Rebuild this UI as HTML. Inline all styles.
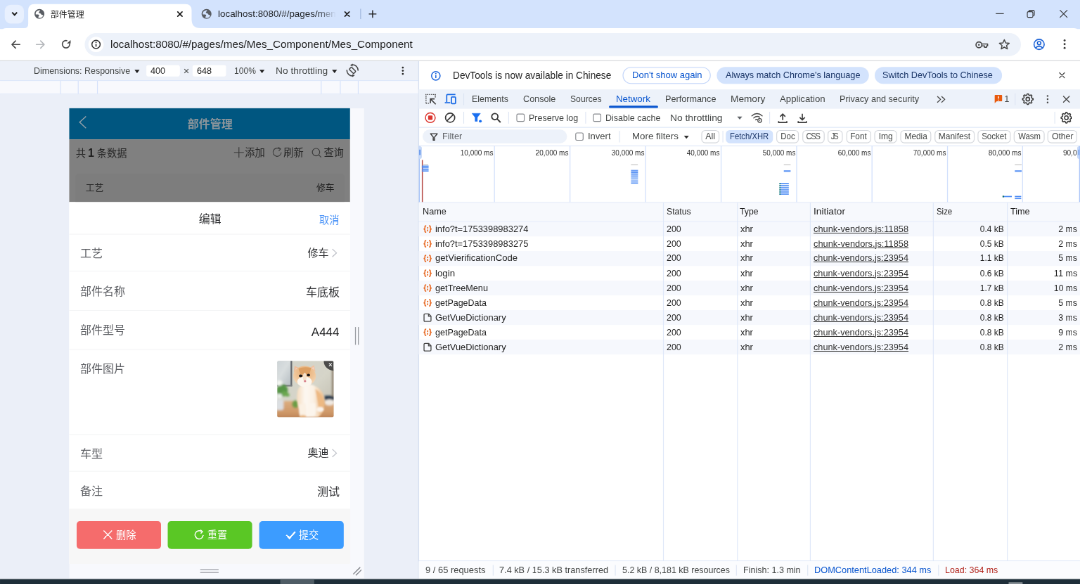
<!DOCTYPE html>
<html lang="zh-CN">
<head>
<meta charset="utf-8">
<title>部件管理</title>
<style>
html,body{margin:0;padding:0;}
html{width:1080px;height:584px;overflow:hidden;background:#fff;}
body{width:1080px;height:584px;overflow:hidden;position:relative;background:#fff;font-family:"Liberation Sans", "Noto Sans CJK SC", sans-serif;}
#root{position:absolute;left:0;top:0;width:1536px;height:831px;overflow:hidden;will-change:transform;transform:scale(0.703125);transform-origin:0 0;}
#z{position:absolute;left:0;top:0;width:1080px;height:584px;zoom:1.4222222;}
.a{position:absolute;left:0;top:0;}
.t{position:absolute;white-space:pre;line-height:14px;font-family:"Liberation Sans", "Noto Sans CJK SC", sans-serif;}
.u{text-decoration:underline;text-decoration-thickness:0.75px;text-underline-offset:0.7px;}
</style>
</head>
<body>
<div id="root"><div id="z">
<svg class="a" width="1080" height="584" viewBox="0 0 1080 584"><rect x="0" y="0" width="1080" height="29" fill="#d3e3fd"/>
<rect x="4.7" y="4.7" width="19.2" height="18.9" rx="6" fill="#e8f0fe"/>
<g transform="translate(10.5 11.4)"><path d="M1.6 1.0 L4.05 3.5 L6.5 1.0" fill="none" stroke="#1f1f1f" stroke-width="1.45" stroke-linejoin="miter"/></g>
<path d="M6.00 28.20H1074.00A6.0 6.0 0 0 1 1080.00 34.20V60.40H0.00V34.20A6.0 6.0 0 0 1 6.00 28.20Z" fill="#fff"/>
<g transform="translate(0 0)"><path d="M23.7 29 V28.2 Q28.2 28.2 28.2 23.7 V10.4 Q28.2 4.1 34.5 4.1 H185.3 Q191.6 4.1 191.6 10.4 V19.4 Q191.6 28.2 200.6 28.2 V29 Z" fill="#fff"/></g>
<g transform="translate(34.4 8.9)"><circle cx="5" cy="5" r="4.95" fill="#595d63"/><path d="M1.9 2.7 Q3.4 1.2 5.5 1.1 L5.3 2.1 Q4.1 3.1 4.4 3.9 L5.7 4.4 Q6.7 4.9 7.1 5.8 L8.8 6.2 Q8.4 8 6.7 8.8 Q5.1 9.3 3.9 8.9 Q3.8 7.6 4.7 6.8 Q4.6 5.8 3.6 5.6 L1.3 5.6 Q0.9 4 1.9 2.7 Z" fill="#fff"/></g></svg>
<span class="t" style="left:50.5px;top:8.19px;font-size:8.45px;color:#1f1f1f;">部件管理</span>
<svg class="a" width="1080" height="584" viewBox="0 0 1080 584"><g transform="translate(177.4 11.5)"><path d="M0.3 0.3 L4.7 4.7 M4.7 0.3 L0.3 4.7" stroke="#1f1f1f" stroke-width="1.2" fill="none" stroke-linecap="round"/></g>
<g transform="translate(201.5 8.9)"><circle cx="5" cy="5" r="4.95" fill="#595d63"/><path d="M1.9 2.7 Q3.4 1.2 5.5 1.1 L5.3 2.1 Q4.1 3.1 4.4 3.9 L5.7 4.4 Q6.7 4.9 7.1 5.8 L8.8 6.2 Q8.4 8 6.7 8.8 Q5.1 9.3 3.9 8.9 Q3.8 7.6 4.7 6.8 Q4.6 5.8 3.6 5.6 L1.3 5.6 Q0.9 4 1.9 2.7 Z" fill="#d3e3fd"/></g></svg>
<span class="t" style="left:217.8px;top:6.78px;font-size:9px;color:#24272b;transform:scaleX(1.0480);transform-origin:0 50%;-webkit-mask-image:linear-gradient(90deg,#000 84%,transparent 100%);mask-image:linear-gradient(90deg,#000 84%,transparent 100%);">localhost:8080/#/pages/men</span>
<svg class="a" width="1080" height="584" viewBox="0 0 1080 584"><g transform="translate(344.6 11.5)"><path d="M0.3 0.3 L4.7 4.7 M4.7 0.3 L0.3 4.7" stroke="#1f1f1f" stroke-width="1.2" fill="none" stroke-linecap="round"/></g>
<rect x="360.2" y="8.8" width="0.8" height="10.2" fill="#9db5dc"/>
<g transform="translate(367.6 9)"><path d="M5 1.2 V8.8 M1.2 5 H8.8" stroke="#1f1f1f" stroke-width="1.0" fill="none"/></g>
<g transform="translate(995.8 9.6)"><path d="M0 4 H8" stroke="#2b2b2b" stroke-width="0.75" fill="none"/></g>
<g transform="translate(1026.8 9.8)"><rect x="0.5" y="1.9" width="5.6" height="5.6" rx="1.2" fill="none" stroke="#2b2b2b" stroke-width="0.75"/><path d="M2 1.9 V1.6 Q2 0.5 3.1 0.5 H6.4 Q7.5 0.5 7.5 1.6 V5 Q7.5 6 6.4 6" fill="none" stroke="#2b2b2b" stroke-width="0.75"/></g>
<g transform="translate(1059.8 10)"><path d="M0.3 0.3 L7.3 7.3 M7.3 0.3 L0.3 7.3" stroke="#2b2b2b" stroke-width="0.75" fill="none" stroke-linecap="round"/></g>
<g transform="translate(11.1 40.2)"><path d="M8.7 4.3 H0.9 M4.4 0.7 L0.8 4.3 L4.4 7.9" stroke="#474747" stroke-width="1.15" fill="none" stroke-linejoin="round" stroke-linecap="round"/></g>
<g transform="translate(36 40.2)"><path d="M0.3 4.3 H8.1 M4.6 0.7 L8.2 4.3 L4.6 7.9" stroke="#b4b7bb" stroke-width="1.15" fill="none" stroke-linejoin="round" stroke-linecap="round"/></g>
<g transform="translate(60.8 39)"><path d="M8.55 3.64 A3.7 3.7 0 1 0 8.23 7.32" fill="none" stroke="#474747" stroke-width="1.15" transform="rotate(-35 5.2 5.2) scale(1,-1) translate(0,-10.4)"/><path d="M9.80 1.10 V4.50 H6.10 Z" fill="#474747"/></g>
<rect x="84.7" y="33" width="936.2" height="23" rx="11.5" fill="#edf2fa"/>
<rect x="88.3" y="36.7" width="15.4" height="15.4" rx="7.7" fill="#fff"/>
<g transform="translate(91 39.4)"><circle cx="5" cy="5" r="4.1" fill="none" stroke="#303030" stroke-width="1"/><path d="M5 4.5 V7.3" stroke="#303030" stroke-width="1.1"/><circle cx="5" cy="2.9" r="0.65" fill="#303030"/></g></svg>
<span class="t" style="left:110.3px;top:36.96px;font-size:10.6px;color:#1f1f1f;transform:scaleX(1.0105);transform-origin:0 50%;">localhost:8080/#/pages/mes/Mes_Component/Mes_Component</span>
<svg class="a" width="1080" height="584" viewBox="0 0 1080 584"><g transform="translate(975.3 40.3)"><circle cx="3.6" cy="4.5" r="2.9" fill="none" stroke="#474747" stroke-width="1.15"/><circle cx="3.6" cy="4.5" r="0.9" fill="#474747"/><path d="M6.5 3.6 H12.3 V5.6 H11.2 V7 H9.2 V5.6 H6.5" fill="none" stroke="#474747" stroke-width="1.1" stroke-linejoin="round"/></g>
<g transform="translate(998.6 38.8)"><path d="M5.7 0.9 L7.1 4.1 L10.6 4.4 L7.95 6.7 L8.75 10.1 L5.7 8.3 L2.65 10.1 L3.45 6.7 L0.8 4.4 L4.3 4.1 Z" fill="none" stroke="#474747" stroke-width="1.05" stroke-linejoin="round"/></g>
<g transform="translate(1033.3 38.6)"><circle cx="5.8" cy="5.8" r="5.1" fill="#f2f6fe" stroke="#1a62d8" stroke-width="1.1"/><circle cx="5.8" cy="4.5" r="1.7" fill="none" stroke="#0b57d0" stroke-width="1"/><path d="M2.4 9.1 Q5.8 6.3 9.2 9.1" fill="none" stroke="#0b57d0" stroke-width="1"/></g>
<g transform="translate(1062.6 38.45)"><circle cx="2" cy="2.0" r="1.05" fill="#3a3a3a"/><circle cx="2" cy="5.75" r="1.05" fill="#3a3a3a"/><circle cx="2" cy="9.5" r="1.05" fill="#3a3a3a"/></g>
<rect x="0" y="60.2" width="1080" height="0.9" fill="#d5d7db"/>
<rect x="0" y="61.1" width="418.7" height="19.5" fill="#edf1f9"/></svg>
<span class="t" style="left:33.7px;top:63.69px;font-size:9.1px;color:#444746;transform:scaleX(0.9632);transform-origin:0 50%;">Dimensions: Responsive</span>
<svg class="a" width="1080" height="584" viewBox="0 0 1080 584"><g transform="translate(134.5 69.75)"><path d="M0 0 H5.0 L2.5 3.3 Z" fill="#1f1f1f"/></g>
<rect x="146.3" y="65" width="33.6" height="11.4" rx="2" fill="#fff"/></svg>
<span class="t" style="left:150.3px;top:63.69px;font-size:9.1px;color:#1f1f1f;transform:scaleX(0.9811);transform-origin:0 50%;">400</span>
<span class="t" style="left:183.26px;top:64.38px;font-size:10.4px;color:#444746;">×</span>
<svg class="a" width="1080" height="584" viewBox="0 0 1080 584"><rect x="192.5" y="65" width="33.6" height="11.4" rx="2" fill="#fff"/></svg>
<span class="t" style="left:196.8px;top:63.69px;font-size:9.1px;color:#1f1f1f;transform:scaleX(0.9811);transform-origin:0 50%;">648</span>
<span class="t" style="left:233.8px;top:63.69px;font-size:9.1px;color:#444746;transform:scaleX(0.9327);transform-origin:0 50%;">100%</span>
<svg class="a" width="1080" height="584" viewBox="0 0 1080 584"><g transform="translate(259.5 69.75)"><path d="M0 0 H5.0 L2.5 3.3 Z" fill="#1f1f1f"/></g></svg>
<span class="t" style="left:275.6px;top:63.69px;font-size:9.1px;color:#444746;transform:scaleX(1.0646);transform-origin:0 50%;">No throttling</span>
<svg class="a" width="1080" height="584" viewBox="0 0 1080 584"><g transform="translate(332 69.75)"><path d="M0 0 H5.0 L2.5 3.3 Z" fill="#1f1f1f"/></g>
<g transform="translate(345.95 63.8)"><g fill="none" stroke="#444" stroke-width="1.05"><rect x="3.35" y="4.9" width="6.3" height="3.2" rx="0.75" transform="rotate(45 6.5 6.5)"/><path d="M5.6 1 A5.6 5.6 0 0 1 12.1 6.9"/><path d="M0.9 6.1 A5.6 5.6 0 0 0 7.4 12"/></g><path d="M4.1 1.5 L6.7 -0.2 L6.6 2.7 Z" fill="#444"/><path d="M8.9 11.5 L6.3 13.2 L6.4 10.3 Z" fill="#444"/></g>
<g transform="translate(400.8 65.55)"><circle cx="2" cy="2.0" r="0.95" fill="#2b2b2b"/><circle cx="2" cy="5.15" r="0.95" fill="#2b2b2b"/><circle cx="2" cy="8.3" r="0.95" fill="#2b2b2b"/></g>
<rect x="0" y="80.6" width="418.7" height="13.4" fill="#f8f9fd"/>
<rect x="60.1" y="80.6" width="0.8" height="13.4" fill="#d6e2fb"/>
<rect x="77.8" y="80.6" width="0.8" height="13.4" fill="#d6e2fb"/>
<rect x="97" y="80.6" width="0.8" height="13.4" fill="#d6e2fb"/>
<rect x="320.8" y="80.6" width="0.8" height="13.4" fill="#d6e2fb"/>
<rect x="339.9" y="80.6" width="0.8" height="13.4" fill="#d6e2fb"/>
<rect x="357.8" y="80.6" width="0.8" height="13.4" fill="#d6e2fb"/>
<rect x="0" y="80.2" width="418.7" height="0.7" fill="#dde7fa"/>
<rect x="0" y="93.6" width="418.7" height="0.7" fill="#dde7fa"/>
<rect x="0" y="94.2" width="418.7" height="484.4" fill="#ebeff8"/>
<rect x="69.2" y="108.2" width="294.9" height="470.2" fill="#f8f9fd"/>
<rect x="355" y="327" width="0.9" height="17.8" fill="#9a9da3"/>
<rect x="357.9" y="327" width="0.9" height="17.8" fill="#9a9da3"/>
<rect x="200.2" y="569.3" width="18.4" height="0.9" fill="#9a9da3"/>
<rect x="200.2" y="572" width="18.4" height="0.9" fill="#9a9da3"/>
<g transform="translate(352 566)"><path d="M1.2 8.2 L8.2 1.2 M3.8 9.4 L9.4 3.8" stroke="#7e8187" stroke-width="0.95" fill="none"/></g>
<rect x="69.2" y="108.2" width="280.8" height="455.6" fill="#fff"/>
<rect x="69.2" y="108.2" width="280.8" height="31.2" fill="#005680"/>
<g transform="translate(78.9 115.9)"><path d="M7.1 0.4 L0.7 6.3 L7.1 12.2" fill="none" stroke="#97a2aa" stroke-width="1" /></g></svg>
<span class="t" style="left:187.49px;top:117.11px;font-size:11.25px;color:#8d969c;font-weight:700;">部件管理</span>
<svg class="a" width="1080" height="584" viewBox="0 0 1080 584"><rect x="69.2" y="139.3" width="280.8" height="62.8" fill="#808080"/></svg>
<span class="t" style="left:75.7px;top:146.76px;font-size:10px;color:#262626;">共</span>
<span class="t" style="left:87.9px;top:146.01px;font-size:11.2px;color:#1c1c1c;font-weight:700;">1</span>
<span class="t" style="left:96.9px;top:146.76px;font-size:10px;color:#262626;">条数据</span>
<svg class="a" width="1080" height="584" viewBox="0 0 1080 584"><g transform="translate(234 147.2)"><path d="M4.9 0 V10.4 M0 5.2 H9.8" stroke="#3a3a3a" stroke-width="0.8" fill="none"/></g></svg>
<span class="t" style="left:244.9px;top:146.04px;font-size:10px;color:#262626;">添加</span>
<svg class="a" width="1080" height="584" viewBox="0 0 1080 584"><g transform="translate(272.2 147.2)"><path d="M9 5.2 A4.1 4.1 0 1 1 7.3 1.7" fill="none" stroke="#3a3a3a" stroke-width="0.8"/><path d="M6.2 0.1 L8.3 1.8 L6.5 3.7" fill="none" stroke="#3a3a3a" stroke-width="0.8"/></g></svg>
<span class="t" style="left:283.6px;top:146.04px;font-size:10px;color:#262626;">刷新</span>
<svg class="a" width="1080" height="584" viewBox="0 0 1080 584"><g transform="translate(311.8 147.8)"><circle cx="4.2" cy="4.3" r="3.7" fill="none" stroke="#3a3a3a" stroke-width="0.8"/><path d="M6.9 7 L9.2 9.4" stroke="#3a3a3a" stroke-width="0.85"/></g></svg>
<span class="t" style="left:323.8px;top:146.04px;font-size:10px;color:#262626;">查询</span>
<svg class="a" width="1080" height="584" viewBox="0 0 1080 584"><path d="M78.40 174.00H341.30A3.0 3.0 0 0 1 344.30 177.00V202.10H75.40V177.00A3.0 3.0 0 0 1 78.40 174.00Z" fill="#7d7d7d"/></svg>
<span class="t" style="left:85.6px;top:180.46px;font-size:9px;color:#2c2c2c;">工艺</span>
<span class="t" style="left:316.4px;top:180.46px;font-size:9px;color:#222;">修车</span>
<svg class="a" width="1080" height="584" viewBox="0 0 1080 584"><rect x="69.2" y="202" width="280.8" height="306.8" fill="#fff"/></svg>
<span class="t" style="left:198.8px;top:212.19px;font-size:11.2px;color:#303133;">编辑</span>
<span class="t" style="left:319.3px;top:213.46px;font-size:10px;color:#4a93f8;">取消</span>
<svg class="a" width="1080" height="584" viewBox="0 0 1080 584"><rect x="69.2" y="233.85" width="280.8" height="0.75" fill="#f4f5f6"/>
<rect x="69.2" y="270.75" width="280.8" height="0.75" fill="#f4f5f6"/>
<rect x="69.2" y="310.05" width="280.8" height="0.75" fill="#f4f5f6"/>
<rect x="69.2" y="348.95" width="280.8" height="0.75" fill="#f4f5f6"/>
<rect x="69.2" y="433.95" width="280.8" height="0.75" fill="#f4f5f6"/>
<rect x="69.2" y="470.85" width="280.8" height="0.75" fill="#f4f5f6"/></svg>
<span class="t" style="left:80.2px;top:246.56px;font-size:11.25px;color:#5c5e63;">工艺</span>
<span class="t" style="left:307.6px;top:245.93px;font-size:10.6px;color:#2f3033;">修车</span>
<svg class="a" width="1080" height="584" viewBox="0 0 1080 584"><g transform="translate(331.5 248.4)"><path d="M0.8 0.6 L5 4.5 L0.8 8.4" fill="none" stroke="#b9bcc4" stroke-width="0.8"/></g></svg>
<span class="t" style="left:80.2px;top:284.61px;font-size:11.25px;color:#5c5e63;">部件名称</span>
<span class="t" style="left:305.83px;top:285.16px;font-size:11.25px;color:#2f3033;">车底板</span>
<span class="t" style="left:80.2px;top:323.09px;font-size:11.25px;color:#5c5e63;">部件型号</span>
<span class="t" style="left:313.22px;top:325.23px;font-size:11.25px;color:#1d1e20;transform:scaleX(1.0578);transform-origin:100% 50%;">A444</span>
<span class="t" style="left:80.2px;top:361.94px;font-size:11.25px;color:#5c5e63;">部件图片</span>
<svg class="a" width="1080" height="584" viewBox="0 0 1080 584"><g transform="translate(277.2 360.8) scale(0.7050 0.7050)">
<defs>
<clipPath id="cc"><rect x="0" y="0" width="80" height="80" rx="2.2"/></clipPath>
<filter id="b1" x="-20%" y="-20%" width="140%" height="140%"><feGaussianBlur stdDeviation="1.5"/></filter>
<filter id="b2" x="-20%" y="-20%" width="140%" height="140%"><feGaussianBlur stdDeviation="0.9"/></filter>
<filter id="b3" x="-20%" y="-20%" width="140%" height="140%"><feGaussianBlur stdDeviation="0.45"/></filter>
<linearGradient id="wall" x1="0" y1="0" x2="1" y2="1"><stop offset="0" stop-color="#d2d3ca"/><stop offset="0.55" stop-color="#d6d5c9"/><stop offset="1" stop-color="#bdb9ab"/></linearGradient>
<linearGradient id="tb" x1="0" y1="0" x2="0" y2="1"><stop offset="0" stop-color="#dcae80"/><stop offset="0.6" stop-color="#cf9868"/><stop offset="1" stop-color="#b67c50"/></linearGradient>
<linearGradient id="fr" x1="0" y1="0" x2="1" y2="1"><stop offset="0" stop-color="#c9d0d4"/><stop offset="0.5" stop-color="#d9dedf"/><stop offset="1" stop-color="#b4bcc1"/></linearGradient>
<radialGradient id="hd" cx="0.5" cy="0.3" r="0.75"><stop offset="0" stop-color="#e6ab72"/><stop offset="0.55" stop-color="#efc496"/><stop offset="1" stop-color="#f6dcc0"/></radialGradient>
<linearGradient id="bd" x1="0" y1="0" x2="1" y2="0"><stop offset="0" stop-color="#f6dcbd"/><stop offset="0.3" stop-color="#fdf8f2"/><stop offset="0.6" stop-color="#fbf1e4"/><stop offset="1" stop-color="#ecbb87"/></linearGradient>
</defs>
<g clip-path="url(#cc)">
<rect width="80" height="80" fill="url(#wall)"/>
<g filter="url(#b3)">
<rect x="-4" y="-4" width="24" height="39" fill="url(#fr)"/>
<rect x="18.9" y="-4" width="2.3" height="40" fill="#666b6f"/>
<rect x="-4" y="34.3" width="25.2" height="2.1" fill="#7b8083"/>
</g>
<g filter="url(#b1)">
<rect x="-4" y="57" width="88" height="27" fill="url(#tb)"/>
<ellipse cx="7" cy="42" rx="8" ry="9" fill="#579647"/>
<ellipse cx="12" cy="47" rx="6" ry="3" fill="#6aa84f" transform="rotate(25 12 47)"/>
<ellipse cx="3" cy="31.5" rx="4.5" ry="4" fill="#f3f6f1"/>
<ellipse cx="3.5" cy="50" rx="3.6" ry="3.6" fill="#e9efe8"/>
<rect x="-3" y="55" width="12" height="15" rx="3" fill="#dcdfe2"/>
<ellipse cx="26" cy="61.5" rx="5" ry="5.5" fill="#6c9d45"/>
<rect x="67" y="49.5" width="16" height="6.5" fill="#27384c"/>
<ellipse cx="74" cy="59" rx="7" ry="4.2" fill="#f0eae3"/>
<rect x="77.6" y="12" width="4" height="39" fill="#8f8270"/>
</g>
<g filter="url(#b2)">
<path d="M29 42 Q26 56 31 70 Q33 79 40 80 L58 80 Q66 74 67 62 Q68 48 60 40 Q50 32 40 33 Q31 35 29 42 Z" fill="url(#bd)"/>
<path d="M54 40 Q64 46 66 58 Q67 70 60 76 Q58 62 54 40 Z" fill="#edb983"/>
<ellipse cx="61" cy="69" rx="5.2" ry="3.6" fill="#fbf4ec"/>
<path d="M31 62 Q30 76 33 80 L41 80 Q42 70 40 60 Z" fill="#fbf1e4"/>
<path d="M45 60 Q43 72 45 77 Q49 80 54 77 Q56 70 54 60 Z" fill="#fcf5ec"/>
<path d="M32 78 Q36 76 41 78 L41 81 L32 81 Z" fill="#e9b988"/>
</g>
<g filter="url(#b3)">
<path d="M23.5 16 L24.6 7 L33 11 Z" fill="#eebd99"/>
<path d="M45.5 10 L52.2 6 L54.3 15.5 Z" fill="#efc3a2"/>
<path d="M26 13.6 L26.4 9.6 L30 11.6 Z" fill="#f3cdbf"/>
<path d="M48.6 10.6 L51.6 8.6 L52.6 13 Z" fill="#f4d0c2"/>
<ellipse cx="38.8" cy="21.6" rx="16" ry="14.2" fill="url(#hd)"/>
<path d="M30 11 Q38 7.6 48 10 L46 18 Q39 20.5 33 18.6 Z" fill="#dd9f62"/>
<ellipse cx="38.8" cy="29.6" rx="10.4" ry="7.4" fill="#fcf6ee"/>
<ellipse cx="39" cy="23" rx="2.6" ry="6" fill="#f6e2cb"/>
<ellipse cx="33.3" cy="21.3" rx="2.5" ry="2.0" fill="#1a1512"/>
<ellipse cx="44.3" cy="20.2" rx="2.3" ry="1.9" fill="#1a1512"/>
<ellipse cx="39.4" cy="28.8" rx="1.7" ry="1.5" fill="#d77f8c"/>
</g>
<path d="M66 0 H80 V14 A14 14 0 0 1 66 0 Z" fill="#3c3c3c" opacity="0.9"/>
<path d="M73.4 3.4 L77.4 7.4 M77.4 3.4 L73.4 7.4" stroke="#fff" stroke-width="1" fill="none"/>
</g></g></svg>
<span class="t" style="left:80.2px;top:446.9px;font-size:11.25px;color:#5c5e63;">车型</span>
<span class="t" style="left:307.6px;top:445.6px;font-size:10.6px;color:#2f3033;">奥迪</span>
<svg class="a" width="1080" height="584" viewBox="0 0 1080 584"><g transform="translate(331.5 448.6)"><path d="M0.8 0.6 L5 4.5 L0.8 8.4" fill="none" stroke="#b9bcc4" stroke-width="0.8"/></g></svg>
<span class="t" style="left:80.2px;top:484.22px;font-size:11.25px;color:#5c5e63;">备注</span>
<span class="t" style="left:317.08px;top:484.86px;font-size:11.25px;color:#2f3033;">测试</span>
<svg class="a" width="1080" height="584" viewBox="0 0 1080 584"><rect x="69.2" y="508.8" width="280.8" height="55" fill="#f7f7f7"/>
<rect x="76.6" y="521.1" width="84.4" height="27.9" rx="3.5" fill="#f56c6c"/>
<rect x="167.7" y="521.1" width="84.4" height="27.9" rx="3.5" fill="#5ac725"/>
<rect x="259.2" y="521.1" width="84.5" height="27.9" rx="3.5" fill="#3c9cff"/>
<g transform="translate(103.1 530.1)"><path d="M0.5 0.5 L8.9 8.9 M8.9 0.5 L0.5 8.9" stroke="#fff" stroke-width="1.0" fill="none"/></g></svg>
<span class="t" style="left:116px;top:528.45px;font-size:10px;color:#fff;">删除</span>
<svg class="a" width="1080" height="584" viewBox="0 0 1080 584"><g transform="translate(194.2 529.8)"><path d="M9 5.2 A4.1 4.1 0 1 1 7.3 1.7" fill="none" stroke="#fff" stroke-width="1.0"/><path d="M6.2 0.1 L8.3 1.8 L6.5 3.7" fill="none" stroke="#fff" stroke-width="1.0"/></g></svg>
<span class="t" style="left:207.3px;top:528.45px;font-size:10px;color:#fff;">重置</span>
<svg class="a" width="1080" height="584" viewBox="0 0 1080 584"><g transform="translate(285.6 530.6)"><path d="M0.7 4.4 L3.9 7.7 L9.6 1.1" fill="none" stroke="#fff" stroke-width="1.5"/></g></svg>
<span class="t" style="left:298.6px;top:528.45px;font-size:10px;color:#fff;">提交</span>
<svg class="a" width="1080" height="584" viewBox="0 0 1080 584"><rect x="418.7" y="61.1" width="661.3" height="517.3" fill="#fff"/>
<rect x="418.2" y="61.1" width="0.9" height="517.3" fill="#d7e0f1"/>
<g transform="translate(430.6 70.6)"><circle cx="5.2" cy="5.2" r="4.3" fill="none" stroke="#2a6fdf" stroke-width="1.1"/><path d="M5.2 4.7 V7.5" stroke="#2a6fdf" stroke-width="1.1"/><circle cx="5.2" cy="3.1" r="0.7" fill="#2a6fdf"/></g></svg>
<span class="t" style="left:452.8px;top:68.56px;font-size:9.7px;color:#1f1f1f;transform:scaleX(0.9938);transform-origin:0 50%;">DevTools is now available in Chinese</span>
<svg class="a" width="1080" height="584" viewBox="0 0 1080 584"><rect x="623" y="67.3" width="87.3" height="16.2" rx="8.1" fill="#fff" stroke="#c0d4fa" stroke-width="0.8"/></svg>
<span class="t" style="left:632.2px;top:67.91px;font-size:9.1px;color:#0b57d0;transform:scaleX(1.0074);transform-origin:0 50%;">Don&#x27;t show again</span>
<svg class="a" width="1080" height="584" viewBox="0 0 1080 584"><rect x="716.8" y="66.9" width="152.1" height="17" rx="8.5" fill="#d3e3fd"/></svg>
<span class="t" style="left:725.4px;top:67.91px;font-size:9.1px;color:#1b3668;transform:scaleX(0.9810);transform-origin:0 50%;">Always match Chrome&#x27;s language</span>
<svg class="a" width="1080" height="584" viewBox="0 0 1080 584"><rect x="874.7" y="66.9" width="127.3" height="17" rx="8.5" fill="#d3e3fd"/></svg>
<span class="t" style="left:882.6px;top:67.91px;font-size:9.1px;color:#1b3668;transform:scaleX(0.9785);transform-origin:0 50%;">Switch DevTools to Chinese</span>
<svg class="a" width="1080" height="584" viewBox="0 0 1080 584"><g transform="translate(1059.2 72.5)"><path d="M0.3 0.3 L5.3 5.3 M5.3 0.3 L0.3 5.3" stroke="#474747" stroke-width="0.95" fill="none" stroke-linecap="round"/></g>
<rect x="418.7" y="89.4" width="661.3" height="19.3" fill="#edf2fa"/>
<g transform="translate(425.4 93.9)"><path d="M0.6 9.4 V0.6 H9.9 V3.6 M0.6 9.4 H3.6" fill="none" stroke="#3c3c3c" stroke-width="1" stroke-dasharray="1.05 0.95"/><path d="M5 5 L10.3 10.3 M5 9.2 V5 H9.2" fill="none" stroke="#3c3c3c" stroke-width="1.1"/></g>
<g transform="translate(444.8 93.8)"><g fill="none" stroke="#1a6be6" stroke-width="1.2"><path d="M1.9 8.1 V1.6 Q1.9 0.7 2.8 0.7 H10.6"/><path d="M0 8.9 H5.4"/><rect x="6.6" y="3.1" width="4.1" height="6.7" rx="0.7"/></g></g>
<rect x="463.4" y="93.4" width="0.7" height="11.6" fill="#dce4f3"/></svg>
<span class="t" style="left:471.8px;top:91.83px;font-size:9.1px;color:#444746;transform:scaleX(0.9625);transform-origin:0 50%;">Elements</span>
<span class="t" style="left:522.8px;top:91.83px;font-size:9.1px;color:#444746;transform:scaleX(0.9768);transform-origin:0 50%;">Console</span>
<span class="t" style="left:570.1px;top:91.83px;font-size:9.1px;color:#444746;transform:scaleX(0.9408);transform-origin:0 50%;">Sources</span>
<span class="t" style="left:616.2px;top:91.83px;font-size:9.1px;color:#0b57d0;transform:scaleX(1.0282);transform-origin:0 50%;">Network</span>
<span class="t" style="left:665.3px;top:91.83px;font-size:9.1px;color:#444746;transform:scaleX(0.9777);transform-origin:0 50%;">Performance</span>
<span class="t" style="left:730.5px;top:91.83px;font-size:9.1px;color:#444746;transform:scaleX(1.0565);transform-origin:0 50%;">Memory</span>
<span class="t" style="left:779.8px;top:91.83px;font-size:9.1px;color:#444746;transform:scaleX(1.0202);transform-origin:0 50%;">Application</span>
<span class="t" style="left:839.5px;top:91.83px;font-size:9.1px;color:#444746;transform:scaleX(0.9770);transform-origin:0 50%;">Privacy and security</span>
<svg class="a" width="1080" height="584" viewBox="0 0 1080 584"><rect x="608.9" y="105.7" width="49.2" height="2.3" rx="1.15" fill="#0b57d0"/>
<g transform="translate(936.6 95.6)"><path d="M0.7 0.7 L3.9 3.8 L0.7 6.9 M4.9 0.7 L8.1 3.8 L4.9 6.9" fill="none" stroke="#474747" stroke-width="0.95"/></g>
<g transform="translate(994.4 94.8)"><path d="M0.3 0.8 Q0.3 0.2 0.9 0.2 H7.1 Q7.7 0.2 7.7 0.8 V5.9 Q7.7 6.5 7.1 6.5 H2.3 L0.3 8.4 Z" fill="#e8590c"/><path d="M4 1.4 V3.9" stroke="#fff" stroke-width="1"/><circle cx="4" cy="5.2" r="0.55" fill="#fff"/></g></svg>
<span class="t" style="left:1004.2px;top:91.85px;font-size:9.1px;color:#444746;">1</span>
<svg class="a" width="1080" height="584" viewBox="0 0 1080 584"><rect x="1014.8" y="93.4" width="0.7" height="11.6" fill="#dce4f3"/>
<g transform="translate(1021.8 93.1)"><path d="M11.27 5.48 L11.27 6.52 L9.92 7.19 L9.62 7.93 L10.10 9.36 L9.36 10.10 L7.93 9.62 L7.19 9.92 L6.52 11.27 L5.48 11.27 L4.81 9.92 L4.07 9.62 L2.64 10.10 L1.90 9.36 L2.38 7.93 L2.08 7.19 L0.73 6.52 L0.73 5.48 L2.08 4.81 L2.38 4.07 L1.90 2.64 L2.64 1.90 L4.07 2.38 L4.81 2.08 L5.48 0.73 L6.52 0.73 L7.19 2.08 L7.93 2.38 L9.36 1.90 L10.10 2.64 L9.62 4.07 L9.92 4.81 Z" fill="none" stroke="#3c3c3c" stroke-width="1.1" stroke-linejoin="round"/><circle cx="6" cy="6" r="1.8" fill="none" stroke="#3c3c3c" stroke-width="1.1"/></g>
<g transform="translate(1045.6 93.9)"><circle cx="2" cy="2.0" r="0.85" fill="#474747"/><circle cx="2" cy="5.3" r="0.85" fill="#474747"/><circle cx="2" cy="8.6" r="0.85" fill="#474747"/></g>
<g transform="translate(1063.2 96)"><path d="M0.3 0.3 L6.1000000000000005 6.1000000000000005 M6.1000000000000005 0.3 L0.3 6.1000000000000005" stroke="#474747" stroke-width="1.0" fill="none" stroke-linecap="round"/></g>
<g transform="translate(424.6 112)"><circle cx="5.7" cy="5.7" r="4.9" fill="none" stroke="#dc362e" stroke-width="1.05"/><rect x="3.5" y="3.5" width="4.4" height="4.4" rx="0.8" fill="#dc362e"/></g>
<g transform="translate(444.6 112.2)"><circle cx="5.5" cy="5.5" r="4.6" fill="none" stroke="#3a3a3a" stroke-width="1.2"/><path d="M2.3 8.7 L8.7 2.3" stroke="#3a3a3a" stroke-width="1.2"/></g>
<rect x="463.4" y="111.8" width="0.7" height="11.8" fill="#dce4f3"/>
<g transform="translate(471.8 112.9)"><path d="M0.2 0.5 H8.6 L5.5 4.5 V8.4 H3.3 V4.5 Z" fill="#1a6ff0" stroke="#1a6ff0" stroke-width="0.4" stroke-linejoin="round"/><circle cx="8.5" cy="8.3" r="1.4" fill="#1a6ff0"/></g>
<g transform="translate(490.8 112.6)"><circle cx="4" cy="4" r="3.1" fill="none" stroke="#3a3a3a" stroke-width="1.3"/><path d="M6.3 6.3 L9.7 9.7" stroke="#3a3a3a" stroke-width="1.4"/></g>
<rect x="508.3" y="111.8" width="0.7" height="11.8" fill="#dce4f3"/>
<rect x="516.8" y="114" width="7.4" height="7.4" rx="1.2" fill="#fff" stroke="#85888d" stroke-width="0.8"/></svg>
<span class="t" style="left:528.8px;top:110.76px;font-size:9.1px;color:#444746;transform:scaleX(0.9674);transform-origin:0 50%;">Preserve log</span>
<svg class="a" width="1080" height="584" viewBox="0 0 1080 584"><rect x="585.3" y="111.8" width="0.7" height="11.8" fill="#dce4f3"/>
<rect x="593.4" y="114" width="7.4" height="7.4" rx="1.2" fill="#fff" stroke="#85888d" stroke-width="0.8"/></svg>
<span class="t" style="left:605.4px;top:110.76px;font-size:9.1px;color:#444746;transform:scaleX(0.9663);transform-origin:0 50%;">Disable cache</span>
<span class="t" style="left:670px;top:110.76px;font-size:9.1px;color:#444746;transform:scaleX(1.0687);transform-origin:0 50%;">No throttling</span>
<svg class="a" width="1080" height="584" viewBox="0 0 1080 584"><g transform="translate(737.2 116.55)"><path d="M0 0 H5 L2.5 2.9 Z" fill="#5f6368"/></g>
<g transform="translate(751 112.2)"><g fill="none" stroke="#474747" stroke-width="1" stroke-linecap="round"><path d="M0.8 3.6 Q6 -0.8 11.2 3.6"/><path d="M2.7 5.7 Q6 3 8.6 5"/><path d="M4.6 7.6 Q5.4 7 6.2 7.2"/></g><circle cx="8.7" cy="8.3" r="1.9" fill="none" stroke="#474747" stroke-width="0.9"/><circle cx="8.7" cy="8.3" r="0.55" fill="#474747"/></g>
<rect x="769.3" y="111.8" width="0.7" height="11.8" fill="#dce4f3"/>
<g transform="translate(777.9 113.1)"><path d="M4.8 7 V1 M2.2 3.5 L4.8 0.9 L7.4 3.5 M0.7 8.1 V9.3 H8.9 V8.1" fill="none" stroke="#3c3c3c" stroke-width="1.15"/></g>
<g transform="translate(797.5 113.1)"><path d="M4.8 0.6 V6.6 M2.2 4.2 L4.8 6.8 L7.4 4.2 M0.7 8.1 V9.3 H8.9 V8.1" fill="none" stroke="#3c3c3c" stroke-width="1.15"/></g>
<rect x="1054.4" y="111.8" width="0.7" height="11.8" fill="#dce4f3"/>
<g transform="translate(1060.4 111.7)"><path d="M11.27 5.48 L11.27 6.52 L9.92 7.19 L9.62 7.93 L10.10 9.36 L9.36 10.10 L7.93 9.62 L7.19 9.92 L6.52 11.27 L5.48 11.27 L4.81 9.92 L4.07 9.62 L2.64 10.10 L1.90 9.36 L2.38 7.93 L2.08 7.19 L0.73 6.52 L0.73 5.48 L2.08 4.81 L2.38 4.07 L1.90 2.64 L2.64 1.90 L4.07 2.38 L4.81 2.08 L5.48 0.73 L6.52 0.73 L7.19 2.08 L7.93 2.38 L9.36 1.90 L10.10 2.64 L9.62 4.07 L9.92 4.81 Z" fill="none" stroke="#3c3c3c" stroke-width="1.1" stroke-linejoin="round"/><circle cx="6" cy="6" r="1.8" fill="none" stroke="#3c3c3c" stroke-width="1.1"/></g>
<rect x="418.7" y="127" width="661.3" height="0.7" fill="#d9e4f7"/>
<rect x="422.6" y="129.6" width="144.4" height="13.6" rx="6.8" fill="#edf2fa"/>
<g transform="translate(429.9 132.9)"><path d="M0.6 0.8 H7.4 L4.7 4.1 V7.3 H3.3 V4.1 Z" fill="none" stroke="#303030" stroke-width="1.0" stroke-linejoin="round"/></g></svg>
<span class="t" style="left:442.4px;top:129.09px;font-size:9.1px;color:#5e6166;transform:scaleX(0.9793);transform-origin:0 50%;">Filter</span>
<svg class="a" width="1080" height="584" viewBox="0 0 1080 584"><rect x="575.7" y="132.9" width="7.4" height="7.4" rx="1.2" fill="#fff" stroke="#85888d" stroke-width="0.8"/></svg>
<span class="t" style="left:588px;top:129.09px;font-size:9.1px;color:#444746;transform:scaleX(1.0066);transform-origin:0 50%;">Invert</span>
<svg class="a" width="1080" height="584" viewBox="0 0 1080 584"><rect x="619.2" y="130.8" width="0.7" height="11.6" fill="#dce4f3"/></svg>
<span class="t" style="left:632.4px;top:129.09px;font-size:9.1px;color:#444746;transform:scaleX(1.0292);transform-origin:0 50%;">More filters</span>
<svg class="a" width="1080" height="584" viewBox="0 0 1080 584"><g transform="translate(683.9 135.75)"><path d="M0 0 H5 L2.5 2.9 Z" fill="#303030"/></g>
<rect x="722.5" y="130.8" width="0.7" height="11.6" fill="#dce4f3"/>
<rect x="701.7" y="130.4" width="17.3" height="12.4" rx="3.6" fill="#fff" stroke="#d4d7dc" stroke-width="0.8"/></svg>
<span class="t" style="left:705.3px;top:129.09px;font-size:9.1px;color:#444746;transform:scaleX(0.9595);transform-origin:50% 50%;">All</span>
<svg class="a" width="1080" height="584" viewBox="0 0 1080 584"><rect x="725.8" y="130" width="47.1" height="13.2" rx="4" fill="#d3e3fd"/></svg>
<span class="t" style="left:727.11px;top:129.09px;font-size:9.1px;color:#1b3668;transform:scaleX(0.8722);transform-origin:50% 50%;">Fetch/XHR</span>
<svg class="a" width="1080" height="584" viewBox="0 0 1080 584"><rect x="776.7" y="130.4" width="21.7" height="12.4" rx="3.6" fill="#fff" stroke="#d4d7dc" stroke-width="0.8"/></svg>
<span class="t" style="left:779.46px;top:129.09px;font-size:9.1px;color:#444746;transform:scaleX(0.8843);transform-origin:50% 50%;">Doc</span>
<svg class="a" width="1080" height="584" viewBox="0 0 1080 584"><rect x="802.8" y="130.4" width="21.4" height="12.4" rx="3.6" fill="#fff" stroke="#d4d7dc" stroke-width="0.8"/></svg>
<span class="t" style="left:805.19px;top:129.09px;font-size:9.1px;color:#444746;letter-spacing:-1.038px;transform:scaleX(0.8600);transform-origin:50% 50%;">CSS</span>
<svg class="a" width="1080" height="584" viewBox="0 0 1080 584"><rect x="828" y="130.4" width="14.3" height="12.4" rx="3.6" fill="#fff" stroke="#d4d7dc" stroke-width="0.8"/></svg>
<span class="t" style="left:830.67px;top:129.09px;font-size:9.1px;color:#444746;letter-spacing:-1.672px;transform:scaleX(0.8600);transform-origin:50% 50%;">JS</span>
<svg class="a" width="1080" height="584" viewBox="0 0 1080 584"><rect x="846.7" y="130.4" width="24" height="12.4" rx="3.6" fill="#fff" stroke="#d4d7dc" stroke-width="0.8"/></svg>
<span class="t" style="left:849.6px;top:129.09px;font-size:9.1px;color:#444746;transform:scaleX(0.9119);transform-origin:50% 50%;">Font</span>
<svg class="a" width="1080" height="584" viewBox="0 0 1080 584"><rect x="874.7" y="130.4" width="21.8" height="12.4" rx="3.6" fill="#fff" stroke="#d4d7dc" stroke-width="0.8"/></svg>
<span class="t" style="left:878.01px;top:129.09px;font-size:9.1px;color:#444746;transform:scaleX(0.9294);transform-origin:50% 50%;">Img</span>
<svg class="a" width="1080" height="584" viewBox="0 0 1080 584"><rect x="900.7" y="130.4" width="30.1" height="12.4" rx="3.6" fill="#fff" stroke="#d4d7dc" stroke-width="0.8"/></svg>
<span class="t" style="left:903.36px;top:129.09px;font-size:9.1px;color:#444746;transform:scaleX(0.9120);transform-origin:50% 50%;">Media</span>
<svg class="a" width="1080" height="584" viewBox="0 0 1080 584"><rect x="935" y="130.4" width="39.2" height="12.4" rx="3.6" fill="#fff" stroke="#d4d7dc" stroke-width="0.8"/></svg>
<span class="t" style="left:937.41px;top:129.09px;font-size:9.1px;color:#444746;transform:scaleX(0.9251);transform-origin:50% 50%;">Manifest</span>
<svg class="a" width="1080" height="584" viewBox="0 0 1080 584"><rect x="978" y="130.4" width="32.3" height="12.4" rx="3.6" fill="#fff" stroke="#d4d7dc" stroke-width="0.8"/></svg>
<span class="t" style="left:980.24px;top:129.09px;font-size:9.1px;color:#444746;transform:scaleX(0.8917);transform-origin:50% 50%;">Socket</span>
<svg class="a" width="1080" height="584" viewBox="0 0 1080 584"><rect x="1014.1" y="130.4" width="30.1" height="12.4" rx="3.6" fill="#fff" stroke="#d4d7dc" stroke-width="0.8"/></svg>
<span class="t" style="left:1016.43px;top:129.09px;font-size:9.1px;color:#444746;transform:scaleX(0.8727);transform-origin:50% 50%;">Wasm</span>
<svg class="a" width="1080" height="584" viewBox="0 0 1080 584"><rect x="1047.8" y="130.4" width="29" height="12.4" rx="3.6" fill="#fff" stroke="#d4d7dc" stroke-width="0.8"/></svg>
<span class="t" style="left:1050.93px;top:129.09px;font-size:9.1px;color:#444746;transform:scaleX(0.9451);transform-origin:50% 50%;">Other</span>
<svg class="a" width="1080" height="584" viewBox="0 0 1080 584"><rect x="418.7" y="145.5" width="661.3" height="0.7" fill="#d9e4f7"/>
<rect x="493.95" y="146.2" width="0.9" height="56" fill="#d3e1fc"/></svg>
<span class="t" style="left:456.24px;top:145.95px;font-size:7.9px;color:#303030;transform:scaleX(0.8899);transform-origin:100% 50%;">10,000 ms</span>
<svg class="a" width="1080" height="584" viewBox="0 0 1080 584"><rect x="569.55" y="146.2" width="0.9" height="56" fill="#d3e1fc"/></svg>
<span class="t" style="left:531.84px;top:145.95px;font-size:7.9px;color:#303030;transform:scaleX(0.8899);transform-origin:100% 50%;">20,000 ms</span>
<svg class="a" width="1080" height="584" viewBox="0 0 1080 584"><rect x="645.05" y="146.2" width="0.9" height="56" fill="#d3e1fc"/></svg>
<span class="t" style="left:607.34px;top:145.95px;font-size:7.9px;color:#303030;transform:scaleX(0.8899);transform-origin:100% 50%;">30,000 ms</span>
<svg class="a" width="1080" height="584" viewBox="0 0 1080 584"><rect x="720.65" y="146.2" width="0.9" height="56" fill="#d3e1fc"/></svg>
<span class="t" style="left:682.94px;top:145.95px;font-size:7.9px;color:#303030;transform:scaleX(0.8899);transform-origin:100% 50%;">40,000 ms</span>
<svg class="a" width="1080" height="584" viewBox="0 0 1080 584"><rect x="796.15" y="146.2" width="0.9" height="56" fill="#d3e1fc"/></svg>
<span class="t" style="left:758.44px;top:145.95px;font-size:7.9px;color:#303030;transform:scaleX(0.8899);transform-origin:100% 50%;">50,000 ms</span>
<svg class="a" width="1080" height="584" viewBox="0 0 1080 584"><rect x="871.55" y="146.2" width="0.9" height="56" fill="#d3e1fc"/></svg>
<span class="t" style="left:833.84px;top:145.95px;font-size:7.9px;color:#303030;transform:scaleX(0.8899);transform-origin:100% 50%;">60,000 ms</span>
<svg class="a" width="1080" height="584" viewBox="0 0 1080 584"><rect x="947.05" y="146.2" width="0.9" height="56" fill="#d3e1fc"/></svg>
<span class="t" style="left:909.34px;top:145.95px;font-size:7.9px;color:#303030;transform:scaleX(0.8899);transform-origin:100% 50%;">70,000 ms</span>
<svg class="a" width="1080" height="584" viewBox="0 0 1080 584"><rect x="1022.15" y="146.2" width="0.9" height="56" fill="#d3e1fc"/></svg>
<span class="t" style="left:984.44px;top:145.95px;font-size:7.9px;color:#303030;transform:scaleX(0.8899);transform-origin:100% 50%;">80,000 ms</span>
<span class="t" style="left:1063.2px;top:145.95px;font-size:7.9px;color:#303030;transform:scaleX(0.8985);transform-origin:0 50%;">90,0</span>
<svg class="a" width="1080" height="584" viewBox="0 0 1080 584"><rect x="418.9" y="146" width="0.9" height="56.2" fill="#a9c5f8"/>
<path d="M418.40 146.20H419.80A2.0 2.0 0 0 1 421.80 148.20V156.80A2.0 2.0 0 0 1 419.80 158.80H418.40V146.20Z" fill="#c7d9f8"/>
<rect x="419.3" y="149.6" width="1.1" height="5.4" fill="#4a86e8"/>
<path d="M1079.20 146.20H1080.00V158.80H1079.20A2.0 2.0 0 0 1 1077.20 156.80V148.20A2.0 2.0 0 0 1 1079.20 146.20Z" fill="#c7d9f8"/>
<rect x="1078.4" y="149.6" width="1.1" height="5.4" fill="#4a86e8"/>
<rect x="1079.1" y="146" width="0.9" height="56.2" fill="#a9c5f8"/>
<rect x="421.8" y="160" width="1" height="42.2" fill="#b23f3b"/>
<rect x="422.6" y="164.1" width="5.6" height="1.2" fill="#d6d6d6"/>
<rect x="421.8" y="165.6" width="6.8" height="1.1" fill="#4a8af5"/>
<rect x="421.8" y="167.2" width="6.8" height="1.1" fill="#4a8af5"/>
<rect x="421.8" y="168.8" width="6.8" height="1.1" fill="#4a8af5"/>
<rect x="421.8" y="170.4" width="6.8" height="1.1" fill="#4a8af5"/>
<rect x="631" y="164.1" width="6.8" height="1.2" fill="#d6d6d6"/>
<rect x="631" y="169.9" width="7" height="1" fill="#6a9df6"/>
<rect x="631" y="171" width="7" height="1" fill="#6a9df6"/>
<rect x="631" y="172.3" width="7" height="1.15" fill="#4a8af5"/>
<rect x="631" y="174.33" width="7" height="1.15" fill="#4a8af5"/>
<rect x="631" y="176.36" width="7" height="1.15" fill="#4a8af5"/>
<rect x="631" y="178.39" width="7" height="1.15" fill="#4a8af5"/>
<rect x="631" y="180.42" width="7" height="1.15" fill="#4a8af5"/>
<rect x="631" y="182.45" width="7" height="1.15" fill="#4a8af5"/>
<rect x="783.8" y="164.1" width="6.8" height="1.2" fill="#d6d6d6"/>
<rect x="783.8" y="170.3" width="6.8" height="1.5" fill="#5b94f5"/>
<rect x="780.4" y="183" width="8.4" height="1.15" fill="#4a8af5"/>
<rect x="780.4" y="185.1" width="8.4" height="1.15" fill="#4a8af5"/>
<rect x="780.4" y="187.2" width="8.4" height="1.15" fill="#4a8af5"/>
<rect x="780.4" y="189.3" width="8.4" height="1.15" fill="#4a8af5"/>
<rect x="780.4" y="191.4" width="8.4" height="1.15" fill="#4a8af5"/>
<rect x="780.4" y="193.5" width="8.4" height="1.15" fill="#4a8af5"/>
<rect x="779.3" y="182.9" width="1.3" height="1.4" fill="#1f7f86"/>
<rect x="779.3" y="185" width="1.3" height="1.4" fill="#1f7f86"/>
<rect x="779.3" y="187.1" width="1.3" height="1.4" fill="#1f7f86"/>
<rect x="779.3" y="189.2" width="1.3" height="1.4" fill="#1f7f86"/>
<rect x="779.3" y="191.3" width="1.3" height="1.4" fill="#1f7f86"/>
<rect x="779.3" y="193.4" width="1.3" height="1.4" fill="#1f7f86"/>
<rect x="1014.8" y="164.1" width="6.8" height="1.2" fill="#d6d6d6"/>
<rect x="1014.8" y="170.3" width="6.8" height="1.5" fill="#5b94f5"/>
<rect x="1003.6" y="195.9" width="8.2" height="1.2" fill="#4a8af5"/>
<rect x="1002.5" y="195.7" width="1.6" height="1.6" fill="#14706f"/>
<rect x="1014.8" y="195.9" width="6.4" height="1.15" fill="#4a8af5"/>
<rect x="1014.8" y="197.9" width="6.4" height="1.15" fill="#4a8af5"/>
<rect x="418.7" y="202.1" width="661.3" height="0.7" fill="#d9e4f7"/>
<rect x="418.7" y="202.8" width="661.3" height="18.4" fill="#f7f9fd"/>
<rect x="418.7" y="221.1" width="661.3" height="0.7" fill="#d9e4f7"/></svg>
<span class="t" style="left:422.6px;top:204.29px;font-size:9.1px;color:#1f1f1f;transform:scaleX(0.9808);transform-origin:0 50%;">Name</span>
<span class="t" style="left:666.7px;top:204.29px;font-size:9.1px;color:#1f1f1f;transform:scaleX(0.9425);transform-origin:0 50%;">Status</span>
<span class="t" style="left:740px;top:204.29px;font-size:9.1px;color:#1f1f1f;transform:scaleX(0.9433);transform-origin:0 50%;">Type</span>
<span class="t" style="left:813.4px;top:204.29px;font-size:9.1px;color:#1f1f1f;transform:scaleX(1.0594);transform-origin:0 50%;">Initiator</span>
<span class="t" style="left:936.4px;top:204.29px;font-size:9.1px;color:#1f1f1f;transform:scaleX(0.8812);transform-origin:0 50%;">Size</span>
<span class="t" style="left:1010.2px;top:204.29px;font-size:9.1px;color:#1f1f1f;transform:scaleX(0.9761);transform-origin:0 50%;">Time</span>
<svg class="a" width="1080" height="584" viewBox="0 0 1080 584"><rect x="418.7" y="221.6" width="661.3" height="14.76" fill="#f6f8fd"/>
<g transform="translate(423.1 225.28)"><g fill="none" stroke="#e8651c" stroke-width="1.1"><path d="M3.1 0.5 Q1.8 0.5 1.8 1.6 V2.7 Q1.8 3.7 0.5 3.7 Q1.8 3.7 1.8 4.7 V5.8 Q1.8 6.9 3.1 6.9"/><path d="M5.9 0.5 Q7.2 0.5 7.2 1.6 V2.7 Q7.2 3.7 8.5 3.7 Q7.2 3.7 7.2 4.7 V5.8 Q7.2 6.9 5.9 6.9"/></g><circle cx="4.5" cy="2.5" r="0.75" fill="#e8651c"/><path d="M4.5 4.3 V5.2 L4.05 5.9" stroke="#e8651c" stroke-width="1.1" fill="none"/></g></svg>
<span class="t" style="left:435.2px;top:222.01px;font-size:9.1px;color:#1f1f1f;transform:scaleX(0.9977);transform-origin:0 50%;">info?t=1753398983274</span>
<span class="t" style="left:666.7px;top:222.01px;font-size:9.1px;color:#1f1f1f;transform:scaleX(0.9613);transform-origin:0 50%;">200</span>
<span class="t" style="left:740.2px;top:222.01px;font-size:9.1px;color:#1f1f1f;transform:scaleX(0.9968);transform-origin:0 50%;">xhr</span>
<span class="t u" style="left:813.4px;top:222.01px;font-size:9.1px;color:#303030;transform:scaleX(0.9897);transform-origin:0 50%;">chunk-vendors.js:11858</span>
<span class="t" style="left:977.72px;top:222.01px;font-size:9.1px;color:#1f1f1f;transform:scaleX(0.9232);transform-origin:100% 50%;">0.4 kB</span>
<span class="t" style="left:1057.48px;top:222.01px;font-size:9.1px;color:#1f1f1f;transform:scaleX(0.9534);transform-origin:100% 50%;">2 ms</span>
<svg class="a" width="1080" height="584" viewBox="0 0 1080 584"><g transform="translate(423.1 240.04)"><g fill="none" stroke="#e8651c" stroke-width="1.1"><path d="M3.1 0.5 Q1.8 0.5 1.8 1.6 V2.7 Q1.8 3.7 0.5 3.7 Q1.8 3.7 1.8 4.7 V5.8 Q1.8 6.9 3.1 6.9"/><path d="M5.9 0.5 Q7.2 0.5 7.2 1.6 V2.7 Q7.2 3.7 8.5 3.7 Q7.2 3.7 7.2 4.7 V5.8 Q7.2 6.9 5.9 6.9"/></g><circle cx="4.5" cy="2.5" r="0.75" fill="#e8651c"/><path d="M4.5 4.3 V5.2 L4.05 5.9" stroke="#e8651c" stroke-width="1.1" fill="none"/></g></svg>
<span class="t" style="left:435.2px;top:236.71px;font-size:9.1px;color:#1f1f1f;transform:scaleX(0.9977);transform-origin:0 50%;">info?t=1753398983275</span>
<span class="t" style="left:666.7px;top:236.71px;font-size:9.1px;color:#1f1f1f;transform:scaleX(0.9613);transform-origin:0 50%;">200</span>
<span class="t" style="left:740.2px;top:236.71px;font-size:9.1px;color:#1f1f1f;transform:scaleX(0.9968);transform-origin:0 50%;">xhr</span>
<span class="t u" style="left:813.4px;top:236.71px;font-size:9.1px;color:#303030;transform:scaleX(0.9897);transform-origin:0 50%;">chunk-vendors.js:11858</span>
<span class="t" style="left:977.72px;top:236.71px;font-size:9.1px;color:#1f1f1f;transform:scaleX(0.9232);transform-origin:100% 50%;">0.5 kB</span>
<span class="t" style="left:1057.48px;top:236.71px;font-size:9.1px;color:#1f1f1f;transform:scaleX(0.9534);transform-origin:100% 50%;">2 ms</span>
<svg class="a" width="1080" height="584" viewBox="0 0 1080 584"><rect x="418.7" y="251.12" width="661.3" height="14.76" fill="#f6f8fd"/>
<g transform="translate(423.1 254.8)"><g fill="none" stroke="#e8651c" stroke-width="1.1"><path d="M3.1 0.5 Q1.8 0.5 1.8 1.6 V2.7 Q1.8 3.7 0.5 3.7 Q1.8 3.7 1.8 4.7 V5.8 Q1.8 6.9 3.1 6.9"/><path d="M5.9 0.5 Q7.2 0.5 7.2 1.6 V2.7 Q7.2 3.7 8.5 3.7 Q7.2 3.7 7.2 4.7 V5.8 Q7.2 6.9 5.9 6.9"/></g><circle cx="4.5" cy="2.5" r="0.75" fill="#e8651c"/><path d="M4.5 4.3 V5.2 L4.05 5.9" stroke="#e8651c" stroke-width="1.1" fill="none"/></g></svg>
<span class="t" style="left:435.2px;top:250.79px;font-size:9.1px;color:#1f1f1f;transform:scaleX(1.0131);transform-origin:0 50%;">getVierificationCode</span>
<span class="t" style="left:666.7px;top:250.79px;font-size:9.1px;color:#1f1f1f;transform:scaleX(0.9613);transform-origin:0 50%;">200</span>
<span class="t" style="left:740.2px;top:250.79px;font-size:9.1px;color:#1f1f1f;transform:scaleX(0.9968);transform-origin:0 50%;">xhr</span>
<span class="t u" style="left:813.4px;top:250.79px;font-size:9.1px;color:#303030;transform:scaleX(0.9828);transform-origin:0 50%;">chunk-vendors.js:23954</span>
<span class="t" style="left:977.72px;top:250.79px;font-size:9.1px;color:#1f1f1f;transform:scaleX(0.9232);transform-origin:100% 50%;">1.1 kB</span>
<span class="t" style="left:1057.48px;top:250.79px;font-size:9.1px;color:#1f1f1f;transform:scaleX(0.9534);transform-origin:100% 50%;">5 ms</span>
<svg class="a" width="1080" height="584" viewBox="0 0 1080 584"><g transform="translate(423.1 269.56)"><g fill="none" stroke="#e8651c" stroke-width="1.1"><path d="M3.1 0.5 Q1.8 0.5 1.8 1.6 V2.7 Q1.8 3.7 0.5 3.7 Q1.8 3.7 1.8 4.7 V5.8 Q1.8 6.9 3.1 6.9"/><path d="M5.9 0.5 Q7.2 0.5 7.2 1.6 V2.7 Q7.2 3.7 8.5 3.7 Q7.2 3.7 7.2 4.7 V5.8 Q7.2 6.9 5.9 6.9"/></g><circle cx="4.5" cy="2.5" r="0.75" fill="#e8651c"/><path d="M4.5 4.3 V5.2 L4.05 5.9" stroke="#e8651c" stroke-width="1.1" fill="none"/></g></svg>
<span class="t" style="left:435.2px;top:266.29px;font-size:9.1px;color:#1f1f1f;transform:scaleX(1.0250);transform-origin:0 50%;">login</span>
<span class="t" style="left:666.7px;top:266.29px;font-size:9.1px;color:#1f1f1f;transform:scaleX(0.9613);transform-origin:0 50%;">200</span>
<span class="t" style="left:740.2px;top:266.29px;font-size:9.1px;color:#1f1f1f;transform:scaleX(0.9968);transform-origin:0 50%;">xhr</span>
<span class="t u" style="left:813.4px;top:266.29px;font-size:9.1px;color:#303030;transform:scaleX(0.9828);transform-origin:0 50%;">chunk-vendors.js:23954</span>
<span class="t" style="left:977.72px;top:266.29px;font-size:9.1px;color:#1f1f1f;transform:scaleX(0.9232);transform-origin:100% 50%;">0.6 kB</span>
<span class="t" style="left:1053.11px;top:266.29px;font-size:9.1px;color:#1f1f1f;transform:scaleX(0.9754);transform-origin:100% 50%;">11 ms</span>
<svg class="a" width="1080" height="584" viewBox="0 0 1080 584"><rect x="418.7" y="280.64" width="661.3" height="14.76" fill="#f6f8fd"/>
<g transform="translate(423.1 284.32)"><g fill="none" stroke="#e8651c" stroke-width="1.1"><path d="M3.1 0.5 Q1.8 0.5 1.8 1.6 V2.7 Q1.8 3.7 0.5 3.7 Q1.8 3.7 1.8 4.7 V5.8 Q1.8 6.9 3.1 6.9"/><path d="M5.9 0.5 Q7.2 0.5 7.2 1.6 V2.7 Q7.2 3.7 8.5 3.7 Q7.2 3.7 7.2 4.7 V5.8 Q7.2 6.9 5.9 6.9"/></g><circle cx="4.5" cy="2.5" r="0.75" fill="#e8651c"/><path d="M4.5 4.3 V5.2 L4.05 5.9" stroke="#e8651c" stroke-width="1.1" fill="none"/></g></svg>
<span class="t" style="left:435.2px;top:280.9px;font-size:9.1px;color:#1f1f1f;transform:scaleX(0.9805);transform-origin:0 50%;">getTreeMenu</span>
<span class="t" style="left:666.7px;top:280.9px;font-size:9.1px;color:#1f1f1f;transform:scaleX(0.9613);transform-origin:0 50%;">200</span>
<span class="t" style="left:740.2px;top:280.9px;font-size:9.1px;color:#1f1f1f;transform:scaleX(0.9968);transform-origin:0 50%;">xhr</span>
<span class="t u" style="left:813.4px;top:280.9px;font-size:9.1px;color:#303030;transform:scaleX(0.9828);transform-origin:0 50%;">chunk-vendors.js:23954</span>
<span class="t" style="left:977.72px;top:280.9px;font-size:9.1px;color:#1f1f1f;transform:scaleX(0.9232);transform-origin:100% 50%;">1.7 kB</span>
<span class="t" style="left:1052.43px;top:280.9px;font-size:9.1px;color:#1f1f1f;transform:scaleX(0.9489);transform-origin:100% 50%;">10 ms</span>
<svg class="a" width="1080" height="584" viewBox="0 0 1080 584"><g transform="translate(423.1 299.08)"><g fill="none" stroke="#e8651c" stroke-width="1.1"><path d="M3.1 0.5 Q1.8 0.5 1.8 1.6 V2.7 Q1.8 3.7 0.5 3.7 Q1.8 3.7 1.8 4.7 V5.8 Q1.8 6.9 3.1 6.9"/><path d="M5.9 0.5 Q7.2 0.5 7.2 1.6 V2.7 Q7.2 3.7 8.5 3.7 Q7.2 3.7 7.2 4.7 V5.8 Q7.2 6.9 5.9 6.9"/></g><circle cx="4.5" cy="2.5" r="0.75" fill="#e8651c"/><path d="M4.5 4.3 V5.2 L4.05 5.9" stroke="#e8651c" stroke-width="1.1" fill="none"/></g></svg>
<span class="t" style="left:435.2px;top:295.83px;font-size:9.1px;color:#1f1f1f;transform:scaleX(0.9662);transform-origin:0 50%;">getPageData</span>
<span class="t" style="left:666.7px;top:295.83px;font-size:9.1px;color:#1f1f1f;transform:scaleX(0.9613);transform-origin:0 50%;">200</span>
<span class="t" style="left:740.2px;top:295.83px;font-size:9.1px;color:#1f1f1f;transform:scaleX(0.9968);transform-origin:0 50%;">xhr</span>
<span class="t u" style="left:813.4px;top:295.83px;font-size:9.1px;color:#303030;transform:scaleX(0.9828);transform-origin:0 50%;">chunk-vendors.js:23954</span>
<span class="t" style="left:977.72px;top:295.83px;font-size:9.1px;color:#1f1f1f;transform:scaleX(0.9232);transform-origin:100% 50%;">0.8 kB</span>
<span class="t" style="left:1057.48px;top:295.83px;font-size:9.1px;color:#1f1f1f;transform:scaleX(0.9534);transform-origin:100% 50%;">5 ms</span>
<svg class="a" width="1080" height="584" viewBox="0 0 1080 584"><rect x="418.7" y="310.16" width="661.3" height="14.76" fill="#f6f8fd"/>
<g transform="translate(423.4 313.24)"><path d="M1.6 0.6 H5.2 L7.6 3 V7.2 Q7.6 8.2 6.6 8.2 H1.6 Q0.6 8.2 0.6 7.2 V1.6 Q0.6 0.6 1.6 0.6 Z M5.1 0.8 V3.1 H7.4" fill="none" stroke="#474747" stroke-width="0.95" stroke-linejoin="round"/></g></svg>
<span class="t" style="left:435.2px;top:310.49px;font-size:9.1px;color:#1f1f1f;transform:scaleX(0.9967);transform-origin:0 50%;">GetVueDictionary</span>
<span class="t" style="left:666.7px;top:310.49px;font-size:9.1px;color:#1f1f1f;transform:scaleX(0.9613);transform-origin:0 50%;">200</span>
<span class="t" style="left:740.2px;top:310.49px;font-size:9.1px;color:#1f1f1f;transform:scaleX(0.9968);transform-origin:0 50%;">xhr</span>
<span class="t u" style="left:813.4px;top:310.49px;font-size:9.1px;color:#303030;transform:scaleX(0.9828);transform-origin:0 50%;">chunk-vendors.js:23954</span>
<span class="t" style="left:977.72px;top:310.49px;font-size:9.1px;color:#1f1f1f;transform:scaleX(0.9232);transform-origin:100% 50%;">0.8 kB</span>
<span class="t" style="left:1057.48px;top:310.49px;font-size:9.1px;color:#1f1f1f;transform:scaleX(0.9534);transform-origin:100% 50%;">3 ms</span>
<svg class="a" width="1080" height="584" viewBox="0 0 1080 584"><g transform="translate(423.1 328.6)"><g fill="none" stroke="#e8651c" stroke-width="1.1"><path d="M3.1 0.5 Q1.8 0.5 1.8 1.6 V2.7 Q1.8 3.7 0.5 3.7 Q1.8 3.7 1.8 4.7 V5.8 Q1.8 6.9 3.1 6.9"/><path d="M5.9 0.5 Q7.2 0.5 7.2 1.6 V2.7 Q7.2 3.7 8.5 3.7 Q7.2 3.7 7.2 4.7 V5.8 Q7.2 6.9 5.9 6.9"/></g><circle cx="4.5" cy="2.5" r="0.75" fill="#e8651c"/><path d="M4.5 4.3 V5.2 L4.05 5.9" stroke="#e8651c" stroke-width="1.1" fill="none"/></g></svg>
<span class="t" style="left:435.2px;top:325.3px;font-size:9.1px;color:#1f1f1f;transform:scaleX(0.9662);transform-origin:0 50%;">getPageData</span>
<span class="t" style="left:666.7px;top:325.3px;font-size:9.1px;color:#1f1f1f;transform:scaleX(0.9613);transform-origin:0 50%;">200</span>
<span class="t" style="left:740.2px;top:325.3px;font-size:9.1px;color:#1f1f1f;transform:scaleX(0.9968);transform-origin:0 50%;">xhr</span>
<span class="t u" style="left:813.4px;top:325.3px;font-size:9.1px;color:#303030;transform:scaleX(0.9828);transform-origin:0 50%;">chunk-vendors.js:23954</span>
<span class="t" style="left:977.72px;top:325.3px;font-size:9.1px;color:#1f1f1f;transform:scaleX(0.9232);transform-origin:100% 50%;">0.8 kB</span>
<span class="t" style="left:1057.48px;top:325.3px;font-size:9.1px;color:#1f1f1f;transform:scaleX(0.9534);transform-origin:100% 50%;">9 ms</span>
<svg class="a" width="1080" height="584" viewBox="0 0 1080 584"><rect x="418.7" y="339.68" width="661.3" height="14.76" fill="#f6f8fd"/>
<g transform="translate(423.4 342.76)"><path d="M1.6 0.6 H5.2 L7.6 3 V7.2 Q7.6 8.2 6.6 8.2 H1.6 Q0.6 8.2 0.6 7.2 V1.6 Q0.6 0.6 1.6 0.6 Z M5.1 0.8 V3.1 H7.4" fill="none" stroke="#474747" stroke-width="0.95" stroke-linejoin="round"/></g></svg>
<span class="t" style="left:435.2px;top:339.98px;font-size:9.1px;color:#1f1f1f;transform:scaleX(0.9967);transform-origin:0 50%;">GetVueDictionary</span>
<span class="t" style="left:666.7px;top:339.98px;font-size:9.1px;color:#1f1f1f;transform:scaleX(0.9613);transform-origin:0 50%;">200</span>
<span class="t" style="left:740.2px;top:339.98px;font-size:9.1px;color:#1f1f1f;transform:scaleX(0.9968);transform-origin:0 50%;">xhr</span>
<span class="t u" style="left:813.4px;top:339.98px;font-size:9.1px;color:#303030;transform:scaleX(0.9828);transform-origin:0 50%;">chunk-vendors.js:23954</span>
<span class="t" style="left:977.72px;top:339.98px;font-size:9.1px;color:#1f1f1f;transform:scaleX(0.9232);transform-origin:100% 50%;">0.8 kB</span>
<span class="t" style="left:1057.48px;top:339.98px;font-size:9.1px;color:#1f1f1f;transform:scaleX(0.9534);transform-origin:100% 50%;">2 ms</span>
<svg class="a" width="1080" height="584" viewBox="0 0 1080 584"><rect x="663" y="202.8" width="0.8" height="358" fill="#dfe8f9"/>
<rect x="737" y="202.8" width="0.8" height="358" fill="#dfe8f9"/>
<rect x="809.9" y="202.8" width="0.8" height="358" fill="#dfe8f9"/>
<rect x="932.9" y="202.8" width="0.8" height="358" fill="#dfe8f9"/>
<rect x="1006.9" y="202.8" width="0.8" height="358" fill="#dfe8f9"/>
<rect x="418.7" y="560.6" width="661.3" height="0.7" fill="#d9e4f7"/>
<rect x="418.7" y="561.3" width="661.3" height="17.1" fill="#fbfcfe"/></svg>
<span class="t" style="left:425.7px;top:563.57px;font-size:8.9px;color:#444746;transform:scaleX(1.0218);transform-origin:0 50%;">9 / 65 requests</span>
<span class="t" style="left:499.3px;top:563.57px;font-size:8.9px;color:#444746;transform:scaleX(1.0079);transform-origin:0 50%;">7.4 kB / 15.3 kB transferred</span>
<span class="t" style="left:622.1px;top:563.57px;font-size:8.9px;color:#444746;transform:scaleX(0.9850);transform-origin:0 50%;">5.2 kB / 8,181 kB resources</span>
<span class="t" style="left:743.3px;top:563.57px;font-size:8.9px;color:#444746;transform:scaleX(0.9927);transform-origin:0 50%;">Finish: 1.3 min</span>
<span class="t" style="left:814.5px;top:563.57px;font-size:8.9px;color:#0b57d0;transform:scaleX(1.0117);transform-origin:0 50%;">DOMContentLoaded: 344 ms</span>
<span class="t" style="left:945.3px;top:563.57px;font-size:8.9px;color:#b3261e;transform:scaleX(0.9836);transform-origin:0 50%;">Load: 364 ms</span>
<svg class="a" width="1080" height="584" viewBox="0 0 1080 584"><rect x="492.75" y="565" width="0.7" height="10.6" fill="#dce4f3"/>
<rect x="614.95" y="565" width="0.7" height="10.6" fill="#dce4f3"/>
<rect x="736.05" y="565" width="0.7" height="10.6" fill="#dce4f3"/>
<rect x="807.35" y="565" width="0.7" height="10.6" fill="#dce4f3"/>
<rect x="938.15" y="565" width="0.7" height="10.6" fill="#dce4f3"/>
<rect x="0" y="579" width="1080" height="5.6" fill="#1e2e39"/>
<rect x="280.2" y="579" width="34" height="5.6" fill="#4f5c65"/>
<rect x="1008.6" y="582.4" width="14" height="1.6" fill="#c9cdd0" opacity="0.7"/></svg>
</div></div>
</body>
</html>
